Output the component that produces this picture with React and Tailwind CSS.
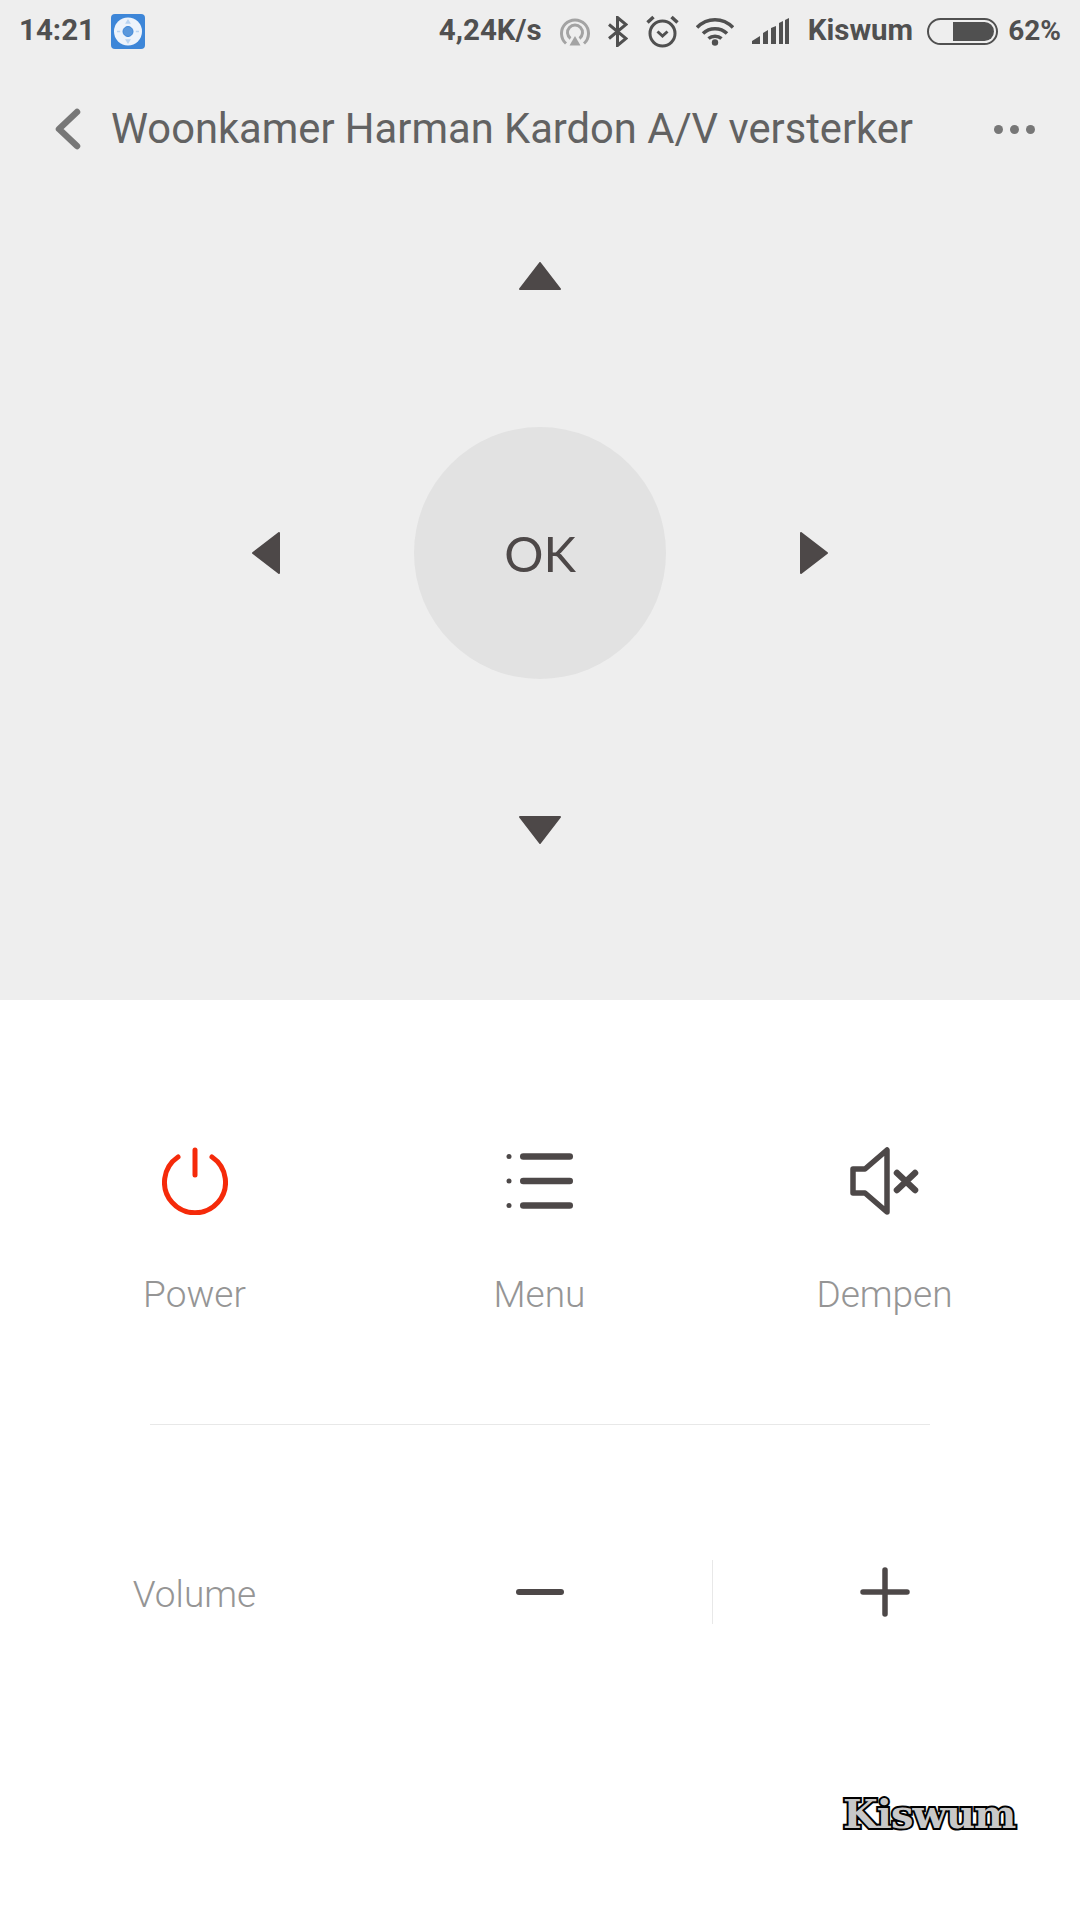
const dark = "#4d4848";

function AppIcon() {
  return (
    <svg width="34" height="35" viewBox="0 0 34 35" className="ml-[16px]">
      <rect width="34" height="35" rx="4" fill="#3d86d8" />
      <circle cx="17" cy="17.5" r="14" fill="#edf3fb" />
      <circle cx="17" cy="17.5" r="5" fill="#5b98dc" stroke="#3d86d8" strokeWidth="1" />
      <path d="M17 6.5l-1.6 2.6h3.2zM17 28.5l-1.6-2.6h3.2zM6 17.5h3.2M24.800 17.500h3.200" fill="#b9d4f2" stroke="#b9d4f2" strokeWidth="1.500" />
    </svg>
  );
}

function CastIcon() {
  return (
    <svg width="30" height="30" viewBox="0 0 30 30" fill="none" stroke="#a3a3a3" strokeWidth="3" className="ml-[18px]">
      <path d="M6 27.500a13.500 13.500 0 1 1 18 0" />
      <path d="M10.500 22.500a7.500 7.500 0 1 1 9 0" />
      <path d="M15 20l5.500 9.500h-11z" fill="#a3a3a3" stroke="none" />
    </svg>
  );
}

function BluetoothIcon() {
  return (
    <svg width="20" height="31" viewBox="0 0 20 31" fill="none" stroke="#505050" strokeWidth="3" className="ml-[18px]">
      <path d="M1 8.500l17 14-8.500 7V1.500l8.500 7-17 14" />
    </svg>
  );
}

function AlarmIcon() {
  return (
    <svg width="33" height="33" viewBox="0 0 33 33" fill="none" stroke="#505050" strokeWidth="3" className="ml-[18px]">
      <circle cx="16.500" cy="18.500" r="12.500" />
      <path d="M11.500 16.500l5 4.500 5-4.500" />
      <path d="M1.500 7.500L7.500 2M31.500 7.500L25.500 2" strokeWidth="3.500" />
    </svg>
  );
}

function WifiIcon() {
  return (
    <svg width="38" height="29" viewBox="0 0 38 29" fill="none" stroke="#505050" strokeWidth="3.500" className="ml-[17px]">
      <path d="M1 10.500c10-10.500 26-10.500 36 0" />
      <path d="M7 16.500c6.500-6.500 17.500-6.500 24 0" />
      <path d="M12.500 21.500c3.500-3 9.500-3 13 0" />
      <circle cx="19" cy="25.500" r="3.200" fill="#505050" stroke="none" />
    </svg>
  );
}

function SignalIcon() {
  return (
    <svg width="37" height="26" viewBox="0 0 37 26" fill="#505050" className="ml-[18px]">
      <path d="M0 26v-3l8-5v8zM11 26V15l5-3v14zM19 26V10l5-2v18zM27 26V5l4-2v23zM33 26V2l4-2v26z" />
    </svg>
  );
}

function BatteryIcon() {
  return (
    <div className="ml-[14px] flex h-[27px] w-[71px] items-center justify-end rounded-full border-2 border-[#505050] pr-[2px]">
      <div className="h-[19px] w-[41px] rounded-r-full bg-[#505050]" />
    </div>
  );
}

function StatusBar() {
  return (
    <div className="flex h-[62px] items-center pl-[19px] pr-[19px] text-[29.500px] font-bold leading-none text-[#505050]">
      <span>14:21</span>
      <AppIcon />
      <span className="ml-auto">4,24K/s</span>
      <CastIcon />
      <BluetoothIcon />
      <AlarmIcon />
      <WifiIcon />
      <SignalIcon />
      <span className="ml-[19px]">Kiswum</span>
      <BatteryIcon />
      <span className="ml-[10px] text-[28px]">62%</span>
    </div>
  );
}

function Header() {
  return (
    <div className="flex h-[134px] items-center pl-[55px] pr-[45px]">
      <svg width="26" height="42" viewBox="0 0 26 42" fill="none" stroke="#777777" strokeWidth="6.500" strokeLinecap="round" strokeLinejoin="round">
        <path d="M22 4L4 21l18 17" />
      </svg>
      <h1 className="ml-[30px] flex-1 text-[41.700px] font-normal leading-none text-[#626262]">
        Woonkamer Harman Kardon A/V versterker
      </h1>
      <div className="flex gap-[7px]">
        <div className="h-[9px] w-[9px] rounded-full bg-[#777777]" />
        <div className="h-[9px] w-[9px] rounded-full bg-[#777777]" />
        <div className="h-[9px] w-[9px] rounded-full bg-[#777777]" />
      </div>
    </div>
  );
}

function Arrow({ d, w, h }) {
  return (
    <svg width={w} height={h} viewBox={`0 0 ${w} ${h}`} fill={dark} stroke={dark} strokeWidth="2" strokeLinejoin="round">
      <path d={d} />
    </svg>
  );
}

function DPad() {
  return (
    <div className="flex h-[804px] flex-col items-center pt-[66px]">
      <Arrow w={42} h={28} d="M21 1L41 27H1z" />
      <div className="mt-[137px] flex items-center gap-[134px]">
        <Arrow w={28} h={42} d="M1 21L27 1V41z" />
        <div className="flex h-[252px] w-[252px] items-center justify-center rounded-full bg-[#e2e2e2] font-['Lato',sans-serif] text-[49px] leading-none text-[#4d4848]">
          OK
        </div>
        <Arrow w={28} h={42} d="M27 21L1 1V41z" />
      </div>
      <div className="mt-[137px]">
        <Arrow w={42} h={28} d="M21 27L41 1H1z" />
      </div>
    </div>
  );
}

function PowerIcon() {
  return (
    <svg width="66" height="68" viewBox="0 0 66 68" fill="none" stroke="#f52a0a" strokeWidth="5" strokeLinecap="round">
      <path d="M33 3v25" />
      <path d="M16 10a30.500 30.500 0 1 0 34 0" />
    </svg>
  );
}

function MenuIcon() {
  return (
    <svg width="68" height="68" viewBox="0 0 68 68" fill={dark}>
      <circle cx="3" cy="9.500" r="2.500" />
      <circle cx="3" cy="34" r="2.500" />
      <circle cx="3" cy="58.500" r="2.500" />
      <rect x="14" y="6.250" width="53" height="6.500" rx="3.250" />
      <rect x="14" y="30.750" width="53" height="6.500" rx="3.250" />
      <rect x="14" y="55.250" width="53" height="6.500" rx="3.250" />
    </svg>
  );
}

function MuteIcon() {
  return (
    <svg width="70" height="68" viewBox="0 0 70 68" fill="none" stroke={dark} strokeWidth="5.500" strokeLinejoin="round" strokeLinecap="round">
      <path d="M3 22h12L37 3v62L15 46H3z" />
      <path d="M47 26l18 17M65 26L47 43" strokeWidth="6.500" />
    </svg>
  );
}

function ActionButton({ icon, label }) {
  return (
    <div className="flex flex-col items-center">
      {icon}
      <span className="mt-[60px] text-[37px] font-light leading-[40px] text-[#959595]">{label}</span>
    </div>
  );
}

function Controls() {
  return (
    <div className="flex flex-col">
      <div className="mt-[147px] grid grid-cols-3 pl-[22px] pr-[23px]">
        <ActionButton icon={<PowerIcon />} label="Power" />
        <ActionButton icon={<MenuIcon />} label="Menu" />
        <ActionButton icon={<MuteIcon />} label="Dempen" />
      </div>
      <div className="mx-[150px] mt-[109px] h-px bg-[#e8e8e8]" />
      <div className="mt-[135px] grid h-[64px] grid-cols-3 pl-[22px] pr-[23px]">
        <div className="flex items-center justify-center pt-[6px] text-[37px] font-light leading-[40px] text-[#959595]">Volume</div>
        <div className="flex items-center justify-center">
          <div className="h-[6px] w-[48px] rounded-full bg-[#4d4848]" />
        </div>
        <div className="flex items-center justify-center border-l border-[#e8e8e8]">
          <svg width="50" height="50" viewBox="0 0 50 50" fill="none" stroke={dark} strokeWidth="5.500" strokeLinecap="round">
            <path d="M3 25h44M25 3v44" />
          </svg>
        </div>
      </div>
    </div>
  );
}

export default function App() {
  return (
    <div className="relative h-[1920px] w-[1080px] overflow-hidden bg-white font-['Roboto',sans-serif]">
      <div className="bg-[#eeeeee]">
        <StatusBar />
        <Header />
        <DPad />
      </div>
      <Controls />
      <div className="absolute left-[843px] top-[1790px] font-['DejaVu_Serif',serif] text-[40px] font-bold leading-[48px] tracking-[-1px] text-[#c8c8c8] [-webkit-text-stroke:4px_#000000] [paint-order:stroke_fill]">
        Kiswum
      </div>
    </div>
  );
}
